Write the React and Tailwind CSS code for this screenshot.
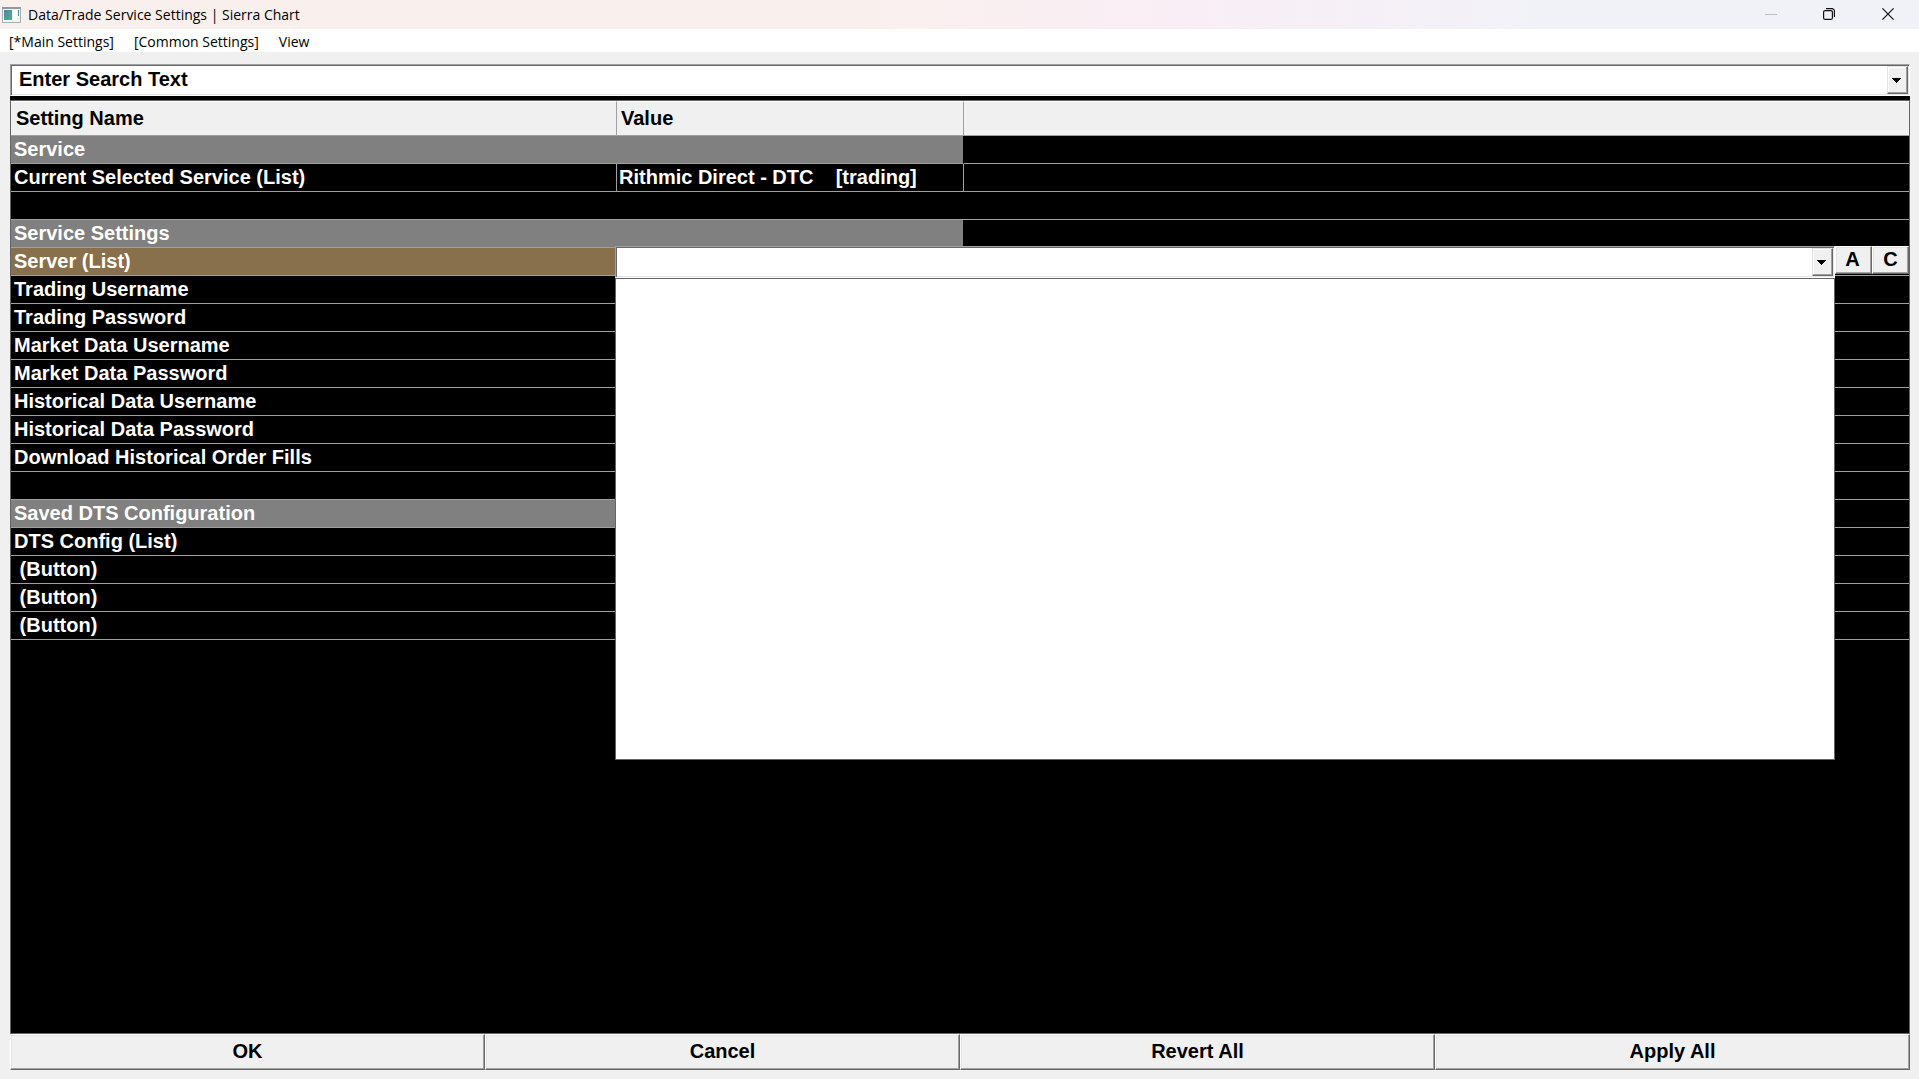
import React from "react";

const rows = [
  { name: "Service", type: "section" },
  { name: "Current Selected Service (List)", value: "Rithmic Direct - DTC    [trading]" },
  { type: "blank" },
  { name: "Service Settings", type: "section" },
  { name: "Server (List)", type: "editing" },
  { name: "Trading Username" },
  { name: "Trading Password" },
  { name: "Market Data Username" },
  { name: "Market Data Password" },
  { name: "Historical Data Username" },
  { name: "Historical Data Password" },
  { name: "Download Historical Order Fills" },
  { type: "blank" },
  { name: "Saved DTS Configuration", type: "section" },
  { name: "DTS Config (List)" },
  { name: " (Button)" },
  { name: " (Button)" },
  { name: " (Button)" },
];

const menuItems = ["[*Main Settings]", "[Common Settings]", "View"];
const footerButtons = ["OK", "Cancel", "Revert All", "Apply All"];

// classic two-tone raised edge used by every push button
const raised =
  "bg-[#f0f0f0] border border-t-white border-l-white border-r-[#696969] border-b-[#696969] shadow-[inset_-1px_-1px_0_#a0a0a0,inset_1px_1px_0_#e3e3e3]";
const sunken =
  "bg-white border border-t-[#a0a0a0] border-l-[#a0a0a0] border-r-white border-b-white shadow-[inset_1px_1px_0_#696969,inset_-1px_-1px_0_#e3e3e3]";

function DropButton({ label }) {
  return (
    <button
      aria-label={label}
      className="flex w-[21px] shrink-0 items-center justify-center bg-[#f0f0f0] pr-0.5 border border-t-[#e3e3e3] border-l-[#e3e3e3] border-r-[#696969] border-b-[#696969] shadow-[inset_-1px_-1px_0_#a0a0a0,inset_1px_1px_0_#ffffff]"
    >
      <svg width="9" height="5" viewBox="0 0 9 5" shapeRendering="crispEdges">
        <path d="M0 0h9v1H0zM1 1h7v1H1zM2 2h5v1H2zM3 3h3v1H3zM4 4h1v1H4z" />
      </svg>
    </button>
  );
}

function TitleBar() {
  return (
    <header className="flex h-[29px] shrink-0 items-center bg-linear-to-r from-[#f9f0ee] from-45% via-[#f9eef5] via-62% to-[#f1f2f8] to-80%">
      <svg width="20" height="16" viewBox="0 0 20 16" className="ml-[2px]">
        <defs>
          <linearGradient id="pane" x1="0" y1="0" x2="1" y2="1">
            <stop offset="0" stopColor="#4a86b0" />
            <stop offset="1" stopColor="#57b07a" />
          </linearGradient>
        </defs>
        <rect x="0.5" y="0.5" width="18" height="15" fill="#eef3f3" stroke="#a8b0b4" />
        <path d="M0 1h19" stroke="#8f9a9f" strokeWidth="2" />
        <rect x="2" y="3" width="8" height="10" fill="url(#pane)" />
        <rect x="11" y="3" width="4" height="10" fill="#ffffff" />
        <rect x="16" y="3" width="1" height="6" fill="#4a9a9a" />
      </svg>
      <h1 className="ml-[6px] text-sm whitespace-nowrap">Data/Trade Service Settings | Sierra Chart</h1>
      <div className="ml-auto flex h-full">
        <button aria-label="Minimize" className="flex w-[60px] items-center justify-center text-[#bdbdc2]">
          <svg width="12" height="12" viewBox="0 0 12 12" stroke="currentColor">
            <path d="M0 5.5h12" />
          </svg>
        </button>
        <button aria-label="Restore" className="flex w-[56px] items-center justify-center pb-px">
          <svg width="12" height="12" viewBox="0 0 12 12" fill="none" stroke="#111" strokeWidth="1.2">
            <rect x="0.6" y="2.6" width="8.8" height="8.8" rx="1.5" />
            <path d="M3 0.6h6a2.4 2.4 0 0 1 2.4 2.4v6" />
          </svg>
        </button>
        <button aria-label="Close" className="flex w-[62px] items-center justify-center pb-px">
          <svg width="12" height="12" viewBox="0 0 12 12" stroke="#111" strokeWidth="1.2">
            <path d="M0.4 0.4l11.2 11.2M11.6 0.4L0.4 11.6" />
          </svg>
        </button>
      </div>
    </header>
  );
}

function ServerEditor() {
  return (
    <div className="absolute -top-[2px] -left-[2px] right-0 flex items-start">
      <div className="flex-1">
        <div className={`flex h-8 p-px ${sunken}`}>
          <input aria-label="Server" className="min-w-0 flex-1 bg-transparent px-1 text-black outline-none" />
          <DropButton label="Open server list" />
        </div>
        <div role="listbox" aria-label="Servers" className="h-[482px] border border-[#646464] bg-white" />
      </div>
      <div className="flex bg-black text-black">
        <button className={`h-7 w-[37px] pr-0.5 pb-1 ${raised}`}>A</button>
        <button className={`h-7 w-[37px] pb-1 ${raised}`}>C</button>
      </div>
    </div>
  );
}

function SettingRow({ row }) {
  const line = "border-b border-[#a0a0a0]";

  if (row.type === "blank") {
    return (
      <tr className="h-7">
        <td colSpan={3} className={line}></td>
      </tr>
    );
  }

  if (row.type === "section") {
    return (
      <tr className="h-7">
        <th colSpan={2} scope="colgroup" className={`border-r border-r-black bg-[#808080] px-[3px] pb-0.5 text-left ${line}`}>
          {row.name}
        </th>
        <td className={line}></td>
      </tr>
    );
  }

  if (row.type === "editing") {
    return (
      <tr className="h-7">
        <td className={`border-r bg-[#89704c] px-[3px] pb-0.5 ${line}`}>{row.name}</td>
        <td colSpan={2} className={`relative ${line}`}>
          <ServerEditor />
        </td>
      </tr>
    );
  }

  return (
    <tr className="h-7">
      <td className={`border-r px-[3px] pb-0.5 whitespace-pre ${line}`}>{row.name}</td>
      <td className={`border-r px-[2px] pb-0.5 whitespace-pre ${line}`}>{row.value}</td>
      <td className={line}></td>
    </tr>
  );
}

export default function App() {
  return (
    <div className="flex min-h-screen flex-col bg-[#f0f0f0] font-['Open_Sans',sans-serif] text-black">
      <TitleBar />
      <nav className="flex h-[23px] shrink-0 items-center gap-5 bg-white pt-0.5 pl-[9px] text-sm">
        {menuItems.map((item) => (
          <a key={item} href="#">{item}</a>
        ))}
      </nav>

      <main className="flex flex-1 flex-col pt-3 pr-[9px] pb-[9px] pl-[10px] font-['Liberation_Sans',Arial,sans-serif] text-xl leading-6 font-bold">
        <div className={`flex h-8 p-px ${sunken}`}>
          <input
            aria-label="Search settings"
            defaultValue="Enter Search Text"
            className="min-w-0 flex-1 bg-transparent px-[7px] pb-0.5 outline-none"
          />
          <DropButton label="Search history" />
        </div>

        <div className="flex flex-1 flex-col border-t-4 border-black">
          <div className="flex-1 border border-[#646464] bg-black text-white">
            <table className="w-full table-fixed border-separate border-spacing-0">
              <colgroup>
                <col className="w-[606px]" />
                <col className="w-[347px]" />
                <col />
              </colgroup>
              <thead className="bg-[#f0f0f0] text-left text-black">
                <tr className="h-[35px]">
                  <th className="border-t border-r border-b border-t-white border-r-[#a0a0a0] border-b-[#a0a0a0] px-[5px] pb-0.5">Setting Name</th>
                  <th className="border-t border-r border-b border-t-white border-r-[#a0a0a0] border-b-[#a0a0a0] px-1 pb-0.5">Value</th>
                  <td className="border-t border-b border-t-white border-b-[#a0a0a0]"></td>
                </tr>
              </thead>
              <tbody>
                {rows.map((row, i) => (
                  <SettingRow key={i} row={row} />
                ))}
              </tbody>
            </table>
          </div>
        </div>

        <div className="grid grid-cols-4">
          {footerButtons.map((label) => (
            <button key={label} className={`h-9 pb-0.5 ${raised}`}>{label}</button>
          ))}
        </div>
      </main>
    </div>
  );
}
